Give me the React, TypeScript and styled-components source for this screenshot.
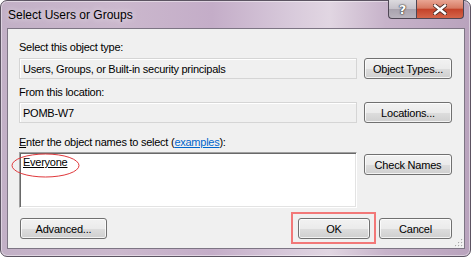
import React, { FC } from "react";
import styled, { createGlobalStyle, css } from "styled-components";

const GlobalStyle = createGlobalStyle`
  html, body {
    margin: 0;
    padding: 0;
    background: #ffffff;
  }
  body {
    font-family: "Liberation Sans", Arial, sans-serif;
  }
`;

const Frame = styled.div`
  box-sizing: border-box;
  width: 471px;
  height: 257px;
  border: 1px solid #5c5462;
  border-radius: 7px;
  padding: 0 5px 6px 6px;
  display: flex;
  flex-direction: column;
  background: linear-gradient(
    90deg,
    #c2b0c6 0%,
    #cbb8cd 25%,
    #c4adc8 45%,
    #d8cadb 62%,
    #e1d6e2 70%,
    #c7b3ca 82%,
    #b9a3bd 100%
  );
  box-shadow: inset 0 0 0 1px rgba(255, 255, 255, 0.45);
`;

const TitleBar = styled.div`
  height: 28px;
  display: flex;
  align-items: flex-start;
  margin: -1px 1px 0 1px;
`;

const Title = styled.div`
  flex: 1;
  padding-top: 8px;
  font-size: 12px;
  line-height: 14px;
  color: #000;
  text-shadow: 0 0 6px rgba(255, 255, 255, 0.8);
`;

const CaptionButton = styled.div<{ variant: "help" | "close" }>`
  box-sizing: border-box;
  height: 19px;
  display: flex;
  align-items: center;
  justify-content: center;
  border: 1px solid #4e4654;
  border-top: none;

  ${({ variant }) =>
    variant === "help"
      ? css`
          width: 28px;
          border-right: none;
          border-radius: 0 0 0 4px;
          background: linear-gradient(
            180deg,
            #dcdade 0%,
            #c6c2ca 48%,
            #a9a3ae 52%,
            #b9b3bd 100%
          );
        `
      : css`
          width: 48px;
          border-radius: 0 0 4px 0;
          background: linear-gradient(
            180deg,
            #e9a593 0%,
            #d77a63 45%,
            #c4432a 52%,
            #d4654a 100%
          );
        `}
`;

const HelpGlyph = styled.span`
  font-family: "DejaVu Sans", sans-serif;
  font-weight: bold;
  font-size: 13px;
  line-height: 13px;
  color: #fff;
  text-shadow: 0 0 1px #333, 0 0 1px #333, 0 0 2px #444;
`;

const Client = styled.div`
  position: relative;
  box-sizing: border-box;
  height: 221px;
  border: 1px solid #7d7584;
  background: #f0f0f0;
  padding: 12px 12px 9px 11px;
  display: flex;
  flex-direction: column;
  font-size: 11px;
  letter-spacing: -0.25px;
  color: #000;
`;

const Label = styled.div<{ top: number; bottom: number }>`
  line-height: 13px;
  margin-top: ${({ top }) => top}px;
  margin-bottom: ${({ bottom }) => bottom}px;
`;

const Row = styled.div<{ height: number }>`
  display: grid;
  grid-template-columns: 1fr 88px;
  column-gap: 7px;
  align-items: start;
  height: ${({ height }) => height}px;
`;

const ReadOnlyField = styled.div`
  box-sizing: border-box;
  height: 21px;
  border: 1px solid #d5d5d5;
  box-shadow: inset 1px 1px 0 #ffffff;
  padding: 0 3px;
  display: flex;
  align-items: center;
`;

const NamesBox = styled.div`
  position: relative;
  box-sizing: border-box;
  height: 56px;
  background: #fff;
  border: 1px solid;
  border-color: #a0a0a0 #ffffff #ffffff #a0a0a0;
  box-shadow: inset 1px 1px 0 #696969, inset -1px -1px 0 #e3e3e3;
  padding: 3px 3px 0 3px;
  line-height: 13px;
`;

const Resolved = styled.span`
  text-decoration: underline;
`;

const Ellipse = styled.svg`
  position: absolute;
  left: -9px;
  top: 0px;
  width: 69px;
  height: 25px;
  overflow: visible;
`;

const Button = styled.button<{ width?: number; offset?: number }>`
  box-sizing: border-box;
  height: 21px;
  width: ${({ width }) => (width ? `${width}px` : "100%")};
  margin-top: ${({ offset }) => offset ?? 0}px;
  padding: 0;
  border: 1px solid #707070;
  border-radius: 3px;
  background: linear-gradient(
    180deg,
    #f2f2f2 0%,
    #ebebeb 50%,
    #dddddd 51%,
    #cfcfcf 100%
  );
  box-shadow: inset 0 0 0 1px rgba(255, 255, 255, 0.75);
  font-family: "Liberation Sans", Arial, sans-serif;
  font-size: 11px;
  letter-spacing: -0.2px;
  color: #000;
`;

// annotation box drawn round the OK button in the screenshot
const Marked = styled.div`
  position: relative;
  display: flex;

  &::after {
    content: "";
    position: absolute;
    top: -6px;
    bottom: -5px;
    left: -7px;
    right: -6px;
    border: 2px solid #f27878;
    pointer-events: none;
  }
`;

const Underlined = styled.span`
  text-decoration: underline;
`;

const Link = styled.a`
  color: #0066cc;
  text-decoration: underline;
`;

const BottomRow = styled.div`
  display: flex;
  align-items: center;
  margin-top: 10px;
  padding-left: 1px;
`;

const Spacer = styled.div`
  flex: 1;
`;

const ButtonGap = styled.div`
  width: 9px;
`;

const Grip = styled.svg`
  position: absolute;
  right: 1px;
  bottom: 1px;
  width: 10px;
  height: 10px;
`;

const CloseIcon: FC = () => (
  <svg width="14" height="11" viewBox="0 0 14 11">
    <path
      d="M2 1.5 L12 9.5 M12 1.5 L2 9.5"
      stroke="#4a2a24"
      strokeWidth="4.2"
      strokeLinecap="square"
    />
    <path
      d="M2 1.5 L12 9.5 M12 1.5 L2 9.5"
      stroke="#ffffff"
      strokeWidth="2.4"
      strokeLinecap="square"
    />
  </svg>
);

const App: FC = () => {
  const dots = [
    [8, 2],
    [8, 5],
    [5, 5],
    [8, 8],
    [5, 8],
    [2, 8],
  ];

  return (
    <>
      <GlobalStyle />
      <Frame>
        <TitleBar>
          <Title>Select Users or Groups</Title>
          <CaptionButton variant="help">
            <HelpGlyph>?</HelpGlyph>
          </CaptionButton>
          <CaptionButton variant="close">
            <CloseIcon />
          </CaptionButton>
        </TitleBar>

        <Client>
          <Label top={0} bottom={4}>
            Select this object type:
          </Label>
          <Row height={21}>
            <ReadOnlyField>Users, Groups, or Built-in security principals</ReadOnlyField>
            <Button>Object Types...</Button>
          </Row>

          <Label top={7} bottom={3}>
            From this location:
          </Label>
          <Row height={21}>
            <ReadOnlyField>POMB-W7</ReadOnlyField>
            <Button>Locations...</Button>
          </Row>

          <Label top={13} bottom={3}>
            <Underlined>E</Underlined>nter the object names to select (
            <Link href="#">examples</Link>):
          </Label>
          <Row height={56}>
            <NamesBox>
              <Resolved>Everyone</Resolved>
              <Ellipse viewBox="0 0 69 25">
                <ellipse
                  cx="34.5"
                  cy="12.5"
                  rx="33.5"
                  ry="11.5"
                  fill="none"
                  stroke="#e0383c"
                  strokeWidth="1"
                />
              </Ellipse>
            </NamesBox>
            <Button offset={2}>Check Names</Button>
          </Row>

          <BottomRow>
            <Button width={87}>Advanced...</Button>
            <Spacer />
            <Marked>
              <Button width={72}>OK</Button>
            </Marked>
            <ButtonGap />
            <Button width={73}>Cancel</Button>
          </BottomRow>

          <Grip viewBox="0 0 10 10">
            {dots.map(([x, y], i) => (
              <g key={i}>
                <rect x={x + 0.6} y={y + 0.6} width="1.2" height="1.2" fill="#ffffff" />
                <rect x={x} y={y} width="1.2" height="1.2" fill="#a8a8a8" />
              </g>
            ))}
          </Grip>
        </Client>
      </Frame>
    </>
  );
};

export default App;
